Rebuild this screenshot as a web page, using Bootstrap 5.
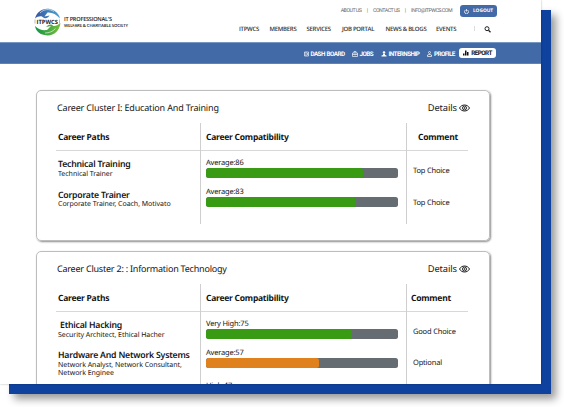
<!DOCTYPE html>
<html lang="en">
<head>
<meta charset="utf-8">
<meta name="viewport" content="width=device-width, initial-scale=1">
<title>ITPWCS Career Report</title>
<link href="https://cdn.jsdelivr.net/npm/bootstrap@5.3.0/dist/css/bootstrap.min.css" rel="stylesheet">
<style>
body{width:564px;height:407px;overflow:hidden;background:#fff;color:#141414;font-family:"Noto Sans","Open Sans",sans-serif;font-size:7.5px;line-height:9px;letter-spacing:-.19px;text-rendering:geometricPrecision}
.backdrop{position:absolute;left:9px;top:10px;width:542px;height:384px;background:#0f429f;box-shadow:5px 5px 8px rgba(0,0,0,.4)}
.screen{width:541px;height:384px;box-shadow:0 0 2px rgba(0,0,0,.3)}
.topline{height:18px;padding:4px 44px 0 0;font:5.3px/14px Roboto,sans-serif;letter-spacing:-.5px;color:#666}
.topline .mail{letter-spacing:-.52px}
.divider{width:11.5px;text-align:center}
.logout{width:37px;height:12px;border-radius:3px;background:#426aa7;font:700 4.8px/12px "Open Sans",sans-serif;letter-spacing:0;margin-left:8px}
.mainline{height:24px;padding-right:50px}
.menu-link{font:600 6px/22px "Open Sans",sans-serif;letter-spacing:-.27px;color:#333;white-space:nowrap}
.brand-logo{position:absolute;left:33px;top:7px}
.subbar{height:22px;background:#426aa7;border-top:1px solid #7896c2;border-bottom:1px solid #6083b7;padding-right:45px;color:#fff;font:700 6.3px/20px Roboto,sans-serif;letter-spacing:-.57px;word-spacing:.8px}
.sub-item{display:flex;align-items:center;white-space:nowrap;gap:2px;padding-top:1px}
.w-menu1{width:30.5px}.w-menu2{width:37px}.w-menu3{width:35.5px}.w-menu4{width:43.5px}.w-menu5{width:50.5px}.w-menu6{width:38px}.w-find{width:17px}
.w-sub1{width:48px}.w-sub2{width:29px}.w-sub3{width:46.5px}.w-sub4{width:32px}
.report-tab{height:10px;width:37px;border-radius:3px;background:#fff;color:#111;line-height:10px;letter-spacing:-.5px;justify-content:center;padding-top:0}
.clusters{padding:26px 0 0 36px;gap:10px}
.cluster{width:454px;height:151px;border:1px solid #bdbdbd;border-radius:5px;box-shadow:1px 1px 2px rgba(0,0,0,.45);padding:10px 19px 0 19px}
.cluster-long{height:190px}
.cluster-title{font-size:9px;line-height:13px;letter-spacing:-.17px;padding-left:1px}
.cluster-long .cluster-title{letter-spacing:-.22px}
.details{font-size:9.3px;letter-spacing:-.08px;gap:2px}
.tbl{margin-top:9px;height:101px;width:412px}
.cluster-long .tbl{height:140px}
.c1{width:145px;border-right:1px solid #cfcfcf}
.c2{width:206px;border-right:1px solid #cfcfcf}
.c3{width:61px}
.hd{height:28px;border-bottom:1px solid #d8d8d8;font-weight:700;font-size:8.5px;line-height:30px;letter-spacing:-.25px;white-space:nowrap;padding-left:2px}
.c2 .hd{padding-left:5px}
.c3 .hd{padding-left:11px}
.cluster-long .c3 .hd{padding-left:4px}
.paths{padding:8px 0 0 2px}
.path-name{font-weight:600;font-size:8.7px;line-height:11px;letter-spacing:-.2px;white-space:nowrap}
.path-sub{font-size:7px;line-height:8.5px;letter-spacing:-.04px;white-space:nowrap;padding-top:.5px}
.path-gap{margin-top:10.5px}
.cluster-long .path-gap{margin-top:10px}
.indent{padding-left:2px}
.scores{padding:7px 0 0 5px}
.meter{height:9.5px;width:192px;border-radius:2.5px;background:#656c72}
.meter .progress-bar{border-radius:2.5px;background:#389b13}
.meter .progress-bar.mid{background:#df821d}
.score{line-height:10.5px;height:10px}
.score-gap{margin-top:9.5px}
.score-last{margin-top:13px}
.comments{padding:16px 0 0 6px}
.comment-gap{margin-top:22.5px}
.cluster-long .comment-gap{margin-top:21.5px}
</style>
</head>
<body class="position-relative">
<div class="backdrop"></div>
<main class="screen bg-white position-relative overflow-hidden">
<header>
<svg class="brand-logo" width="100" height="30" viewBox="0 0 100 30">
<defs><linearGradient id="gr"><stop stop-color="#109547"/><stop offset="1" stop-color="#79be3c"/></linearGradient><linearGradient id="bl"><stop stop-color="#3554a0"/><stop offset="1" stop-color="#4ba4d0"/></linearGradient></defs>
<path d="M2 11.500C4 3 13-1 21 3.500c3.500 2 5.500 5 6 8C23 7 19 5 14.500 5.500l-3 4 5-1c-2 3.500-5 3.500-7.500 1-2-.5-5 0-7 2z" fill="url(#bl)"/>
<path d="M7 6c4-4 9-4.500 14-1.500" stroke="#fff" stroke-width=".6" fill="none"/>
<path d="M2 19c4 4 8 4.500 12 4l4-4-5 1c3-3.500 6-3 7.500-1 2 .5 4-1 7-3-1 8.500-8 14-16 12C6 27 3 24 2 19z" fill="url(#gr)"/>
<path d="M12 26c4 0 8-1.500 10.500-4.500" stroke="#fff" stroke-width=".6" fill="none"/>
<text x="3.500" y="16.800" font-family="Open Sans,sans-serif" font-weight="700" font-size="5.800" letter-spacing="0" textLength="21.500" fill="#222">ITPWCS</text>
<path d="M2 12.500v4M26.500 12.500v4" stroke="#777" stroke-width=".5"/>
<text x="31" y="14.300" font-family="Open Sans,sans-serif" font-weight="600" font-size="5.600" letter-spacing="0" textLength="48" fill="#222">IT PROFESSIONAL'S</text>
<text x="31" y="20.400" font-family="Open Sans,sans-serif" font-weight="600" font-size="4.300" letter-spacing="0" textLength="64" fill="#222">WELFARE &amp; CHARITABLE SOCIETY</text>
</svg>
<div class="topline d-flex justify-content-end align-items-center">
<span>ABOUT US</span><span class="divider">|</span><span>CONTACT US</span><span class="divider">|</span><span class="mail">INFO@ITPWCS.COM</span>
<span class="logout text-white d-flex align-items-center justify-content-center"><svg class="me-1" width="5" height="5" viewBox="0 0 10 10" fill="none" stroke="#fff" stroke-width="1.600"><path d="M3 2a4 4 0 1 0 4 0M5 0v5"/></svg>LOGOUT</span>
</div>
<nav class="mainline d-flex justify-content-end">
<span class="menu-link w-menu1">ITPWCS</span><span class="menu-link w-menu2">MEMBERS</span><span class="menu-link w-menu3">SERVICES</span><span class="menu-link w-menu4">JOB PORTAL</span><span class="menu-link w-menu5">NEWS &amp; BLOGS</span><span class="menu-link w-menu6">EVENTS</span>
<span class="w-find pt-1"><svg class="d-block mt-1" width="17" height="9" viewBox="0 0 17 9" fill="none"><path d="M.5 0v5" stroke="#ddd"/><circle cx="13" cy="2.700" r="2" stroke="#222"/><path d="M14.500 4.200l2 2" stroke="#222" stroke-width="1.300"/></svg></span>
</nav>
<nav class="subbar d-flex justify-content-end align-items-center">
<span class="sub-item w-sub1"><svg width="5" height="6" viewBox="0 0 10 12" fill="none" stroke="#fff" stroke-width="1.300"><path d="M1 2h8v8H1zM4 2v8M6 5h2M6 7h2"/></svg>DASH BOARD</span>
<span class="sub-item w-sub2"><svg width="6" height="6" viewBox="0 0 12 12" fill="none" stroke="#fff" stroke-width="1.300"><path d="M1 4h10v7H1zM4 4V1h4v3M1 7h10M5 8h2"/></svg>JOBS</span>
<span class="sub-item w-sub3"><svg width="6" height="6" viewBox="0 0 12 12" fill="#fff"><circle cx="6" cy="3" r="2.500"/><path d="M4 6h4v2l3 1v2H1V9l3-1z"/></svg>INTERNSHIP</span>
<span class="sub-item w-sub4"><svg width="5" height="6" viewBox="0 0 10 12" fill="none" stroke="#fff" stroke-width="1.400"><circle cx="5" cy="3" r="2"/><path d="M1 11V8l3-1h2l3 1v3z"/></svg>PROFILE</span>
<span class="sub-item report-tab"><svg width="6" height="6" viewBox="0 0 12 12" fill="#111"><path d="M0 7h3v4H0zM4 1h3v10H4zM8 4h3v7H8z"/></svg>REPORT</span>
</nav>
</header>
<div class="clusters d-flex flex-column">
<section class="cluster">
<div class="cluster-title d-flex justify-content-between"><span>Career Cluster I: Education And Training</span><span class="details d-flex align-items-center">Details<svg width="11" height="8" viewBox="0 0 22 16" fill="none" stroke="#222" stroke-width="2"><path d="M1 8C5 0 17 0 21 8 17 16 5 16 1 8z"/><circle cx="11" cy="8" r="4"/><circle cx="11" cy="8" r="1"/></svg></span></div>
<div class="tbl d-flex">
<div class="c1"><div class="hd">Career Paths</div><div class="paths"><div class="path-name">Technical Training</div><div class="path-sub">Technical Trainer</div><div class="path-name path-gap">Corporate Trainer</div><div class="path-sub">Corporate Trainer, Coach, Motivato</div></div></div>
<div class="c2"><div class="hd">Career Compatibility</div><div class="scores"><div class="score">Average:86</div><div class="meter progress"><div class="progress-bar" style="width:82%"></div></div><div class="score score-gap">Average:83</div><div class="meter progress"><div class="progress-bar" style="width:78%"></div></div></div></div>
<div class="c3"><div class="hd">Comment</div><div class="comments text-nowrap"><div>Top Choice</div><div class="comment-gap">Top Choice</div></div></div>
</div>
</section>
<section class="cluster cluster-long">
<div class="cluster-title d-flex justify-content-between"><span>Career Cluster 2: : Information Technology</span><span class="details d-flex align-items-center">Details<svg width="11" height="8" viewBox="0 0 22 16" fill="none" stroke="#222" stroke-width="2"><path d="M1 8C5 0 17 0 21 8 17 16 5 16 1 8z"/><circle cx="11" cy="8" r="4"/><circle cx="11" cy="8" r="1"/></svg></span></div>
<div class="tbl d-flex">
<div class="c1"><div class="hd">Career Paths</div><div class="paths"><div class="path-name indent">Ethical Hacking</div><div class="path-sub">Security Architect, Ethical Hacher</div><div class="path-name path-gap">Hardware And Network Systems</div><div class="path-sub">Network Analyst, Network Consultant,<br>Network Enginee</div></div></div>
<div class="c2"><div class="hd">Career Compatibility</div><div class="scores"><div class="score">Very High:75</div><div class="meter progress"><div class="progress-bar" style="width:76%"></div></div><div class="score score-gap">Average:57</div><div class="meter progress"><div class="progress-bar mid" style="width:59%"></div></div><div class="score score-last">High:47</div></div></div>
<div class="c3"><div class="hd">Comment</div><div class="comments text-nowrap"><div>Good Choice</div><div class="comment-gap">Optional</div></div></div>
</div>
</section>
</div>
</main>
<script src="https://cdn.jsdelivr.net/npm/bootstrap@5.3.0/dist/js/bootstrap.bundle.min.js"></script>
</body>
</html>
